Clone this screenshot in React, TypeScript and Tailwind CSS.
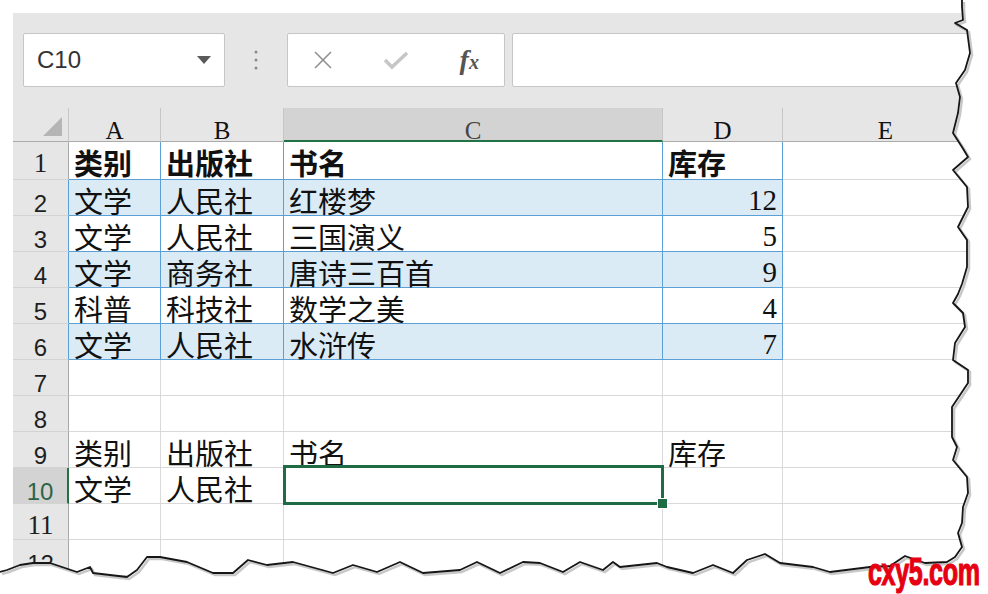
import React from "react";

type Row = { n: number; cells: string[]; bold?: boolean };

const rows: Row[] = [
  { n: 1, cells: ["类别", "出版社", "书名", "库存"], bold: true },
  { n: 2, cells: ["文学", "人民社", "红楼梦", "12"] },
  { n: 3, cells: ["文学", "人民社", "三国演义", "5"] },
  { n: 4, cells: ["文学", "商务社", "唐诗三百首", "9"] },
  { n: 5, cells: ["科普", "科技社", "数学之美", "4"] },
  { n: 6, cells: ["文学", "人民社", "水浒传", "7"] },
  { n: 7, cells: ["", "", "", ""] },
  { n: 8, cells: ["", "", "", ""] },
  { n: 9, cells: ["类别", "出版社", "书名", "库存"] },
  { n: 10, cells: ["文学", "人民社", "", ""] },
  { n: 11, cells: ["", "", "", ""] },
  { n: 12, cells: ["", "", "", ""] },
];

const colW = ["w-[92px]", "w-[123px]", "w-[379px]", "w-[120px]"];

const rightEdge: [number, number][] = [
  [962, 0], [962, 7], [963, 20], [955, 23], [967, 30], [970, 53], [965, 70], [956, 83], [960, 97],
  [958, 113], [953, 133], [962, 147], [968, 157], [953, 170], [967, 187], [968, 207], [958, 227],
  [967, 240], [967, 267], [962, 284], [958, 294], [953, 303], [963, 313], [965, 327], [955, 343],
  [953, 360], [968, 370], [968, 383], [952, 407], [952, 437], [957, 447], [953, 460], [967, 477],
  [968, 493], [963, 507], [962, 523], [958, 533], [962, 547], [955, 557], [947, 562],
];
const bottomEdge: [number, number][] = [
  [925, 563], [905, 556], [890, 566], [870, 567], [830, 572], [813, 567], [780, 563], [765, 554],
  [747, 560], [733, 573], [713, 565], [693, 573], [667, 567], [657, 563], [620, 567], [613, 562],
  [603, 570], [580, 562], [563, 572], [540, 563], [523, 562], [500, 573], [477, 562], [460, 570],
  [423, 573], [400, 562], [377, 572], [353, 565], [333, 573], [293, 562], [267, 565], [248, 560],
  [233, 573], [213, 573], [187, 562], [160, 557], [147, 557], [137, 570], [127, 577], [93, 573],
  [90, 567], [77, 572], [50, 563], [33, 563], [20, 565], [7, 570], [0, 572],
];

const edge = [...rightEdge, ...bottomEdge];
const edgeStr = edge.map((p) => p.join(",")).join(" ");
const shadowStr = edge.map((p) => `${p[0] + 2},${p[1] + 2}`).join(" ");
const fillStr = edgeStr + " 0,594 988,594 988,0";

function RowHeader({ n }: { n: number }) {
  const inTable = n >= 2 && n <= 6;
  const selected = n === 10;
  const serif = n === 1 || n === 11;
  return (
    <div
      className={`w-[56px] shrink-0 border-b border-b-[#d3d3d3] text-center ${
        selected
          ? "bg-[#d3d3d3] border-r-2 border-r-[#217346] text-[#2b6447]"
          : inTable
          ? "bg-[#e6e6e6] border-r border-r-[#5aa0d6] text-[#1f1f1f]"
          : "bg-[#e6e6e6] border-r border-r-[#a9a9a9] text-[#1f1f1f]"
      } ${
        serif
          ? "font-['Liberation_Serif',serif] text-[27px] leading-[27px] pt-[8px]"
          : "font-['Liberation_Sans',sans-serif] text-[24px] leading-[24px] pt-[12px]"
      }`}
    >
      {n}
    </div>
  );
}

const headLetter =
  "shrink-0 text-center font-['Liberation_Serif',serif] text-[25px] leading-[25px] pt-[10px] border-r border-r-[#c6c6c6]";

export default function App() {
  return (
    <div className="relative w-[988px] h-[594px] overflow-hidden bg-white pt-[13px] pl-[13px]">
      <div className="w-[975px]">
        {/* Toolbar */}
        <div className="h-[95px] bg-[#e6e6e6] pt-[20px] pl-[10px] flex items-start">
          <div className="w-[202px] h-[54px] bg-white border border-[#c6c6c6] rounded-[2px] flex items-center justify-between pl-[13px] pr-[13px]">
            <span className="font-['Liberation_Sans',sans-serif] text-[24px] text-[#333]">C10</span>
            <svg width="14" height="9" viewBox="0 0 14 9">
              <polygon points="0,0 14,0 7,8" fill="#5a5a5a" />
            </svg>
          </div>
          <div className="w-[62px] h-[54px] flex items-center justify-center">
            <svg width="4" height="20" viewBox="0 0 4 20">
              <circle cx="2" cy="2" r="1.5" fill="#8a8a8a" />
              <circle cx="2" cy="10" r="1.5" fill="#8a8a8a" />
              <circle cx="2" cy="18" r="1.5" fill="#8a8a8a" />
            </svg>
          </div>
          <div className="w-[218px] h-[54px] bg-white border border-[#c6c6c6] rounded-[2px] flex items-center justify-around">
            <svg width="20" height="18" viewBox="0 0 20 18">
              <line x1="2" y1="1" x2="18" y2="17" stroke="#8f8f8f" strokeWidth="1.6" />
              <line x1="18" y1="1" x2="2" y2="17" stroke="#8f8f8f" strokeWidth="1.6" />
            </svg>
            <svg width="26" height="20" viewBox="0 0 26 20">
              <polyline points="2,10 9,17 24,3" fill="none" stroke="#c6c6c6" strokeWidth="3.5" />
            </svg>
            <span className="font-['Liberation_Serif',serif] italic font-bold text-[#555] leading-none">
              <span className="text-[28px]">f</span>
              <span className="text-[20px]">x</span>
            </span>
          </div>
          <div className="ml-[7px] flex-1 h-[54px] bg-white border border-[#c6c6c6] rounded-[2px]" />
        </div>

        {/* Column headers */}
        <div className="flex h-[34px]">
          <div className="w-[56px] shrink-0 bg-[#e6e6e6] border-r border-r-[#c6c6c6] border-b border-b-[#ababab]">
            <svg width="55" height="33" viewBox="0 0 55 33" className="block">
              <polygon points="49,9 49,28 30,28" fill="#b5b5b5" />
            </svg>
          </div>
          {["A", "B", "C", "D"].map((l, i) => (
            <div
              key={l}
              className={`${colW[i]} ${headLetter} ${
                l === "C"
                  ? "bg-[#d3d3d3] border-b-2 border-b-[#217346] text-[#444]"
                  : "bg-[#e6e6e6] border-b border-b-[#ababab] text-[#111]"
              }`}
            >
              {l}
            </div>
          ))}
          <div className="flex-1 text-center font-['Liberation_Serif',serif] text-[25px] leading-[25px] pt-[10px] bg-[#e6e6e6] border-b border-b-[#ababab] text-[#111]">
            E
          </div>
        </div>

        {/* Rows */}
        {rows.map((r) => {
          const inTable = r.n <= 6;
          const shaded = r.n === 2 || r.n === 4 || r.n === 6;
          return (
            <div key={r.n} className={`flex ${r.n === 1 ? "h-[38px]" : "h-[36px]"}`}>
              <RowHeader n={r.n} />
              {r.cells.map((c, i) => {
                const isNum = i === 3 && r.n >= 2 && r.n <= 6;
                const border = inTable
                  ? "border-r border-b border-[#5aa0d6]"
                  : "border-r border-b border-[#d9d9d9]";
                const bg = shaded ? "bg-[#dbebf6]" : "bg-white";
                const sel = r.n === 10 && i === 2;
                return (
                  <div
                    key={i}
                    className={`${colW[i]} shrink-0 relative whitespace-nowrap ${sel ? "z-10" : ""} ${border} ${bg} ${
                      isNum
                        ? "text-right pr-[5px] pt-[5px] font-['Liberation_Serif',serif] text-[29px] leading-[30px] text-[#111]"
                        : `pl-[5px] pt-[5px] font-['Noto_Sans_CJK_SC',sans-serif] text-[29px] leading-[30px] text-[#111] ${
                            r.bold ? "font-bold" : "font-normal"
                          }`
                    }`}
                  >
                    {c}
                    {sel && (
                      <div className="absolute top-[-3px] left-[-1px] right-[-2px] bottom-[-2px] border-[3px] border-[#1f6b43]">
                        <div className="absolute right-[-7px] bottom-[-7px] w-[11px] h-[11px] bg-[#1f6b43] border border-white" />
                      </div>
                    )}
                  </div>
                );
              })}
              <div className="flex-1 border-b border-[#d9d9d9] bg-white" />
            </div>
          );
        })}
      </div>

      {/* Torn paper edge */}
      <svg
        className="absolute left-0 top-0 pointer-events-none z-20"
        width="988"
        height="594"
        viewBox="0 0 988 594"
      >
        <polygon points={fillStr} fill="#ffffff" />
        <polyline points={shadowStr} fill="none" stroke="#9a9a9a" strokeWidth="2.5" strokeOpacity="0.55" />
        <polyline points={edgeStr} fill="none" stroke="#161616" strokeWidth="1.8" strokeLinejoin="round" />
      </svg>

      {/* Watermark */}
      <div className="absolute z-30 left-[868px] top-[550px] font-['Liberation_Sans',sans-serif] font-bold text-[38px] leading-[44px] text-[#e60012] scale-x-[0.66] origin-left tracking-[-0.5px] whitespace-nowrap [-webkit-text-stroke:1.2px_#e60012]">
        cxy5.com
      </div>
    </div>
  );
}
